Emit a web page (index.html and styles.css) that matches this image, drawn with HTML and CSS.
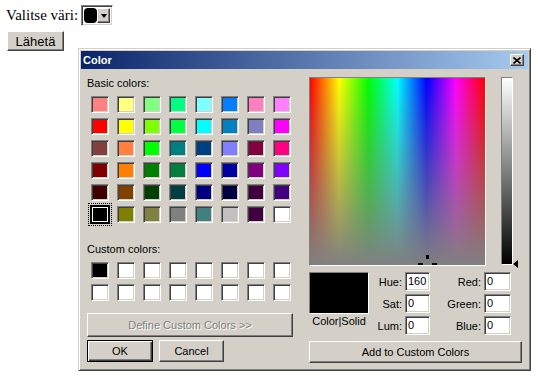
FILE: index.html
```html
<!DOCTYPE html>
<html>
<head>
  <meta charset="utf-8">
  <title>Valitse väri</title>
  <link rel="stylesheet" href="styles.css">
</head>
<body>

  <form class="page-form">
    <div class="pick-row">
      <span class="pick-label">Valitse väri:</span>
      <span class="color-picker">
        <span class="picker-swatch"></span>
        <span class="picker-drop"><span class="drop-arrow"></span></span>
      </span>
    </div>
    <button type="button" class="send-btn">Lähetä</button>
  </form>

  <div class="dialog">
    <div class="titlebar">
      <span class="title-text">Color</span>
      <span class="close-btn">
        <svg width="8" height="7" viewBox="0 0 8 7">
          <path d="M0.5 0.5 L7.5 6.5 M7.5 0.5 L0.5 6.5" stroke="#000" stroke-width="1.6" fill="none"/>
        </svg>
      </span>
    </div>

    <div class="dialog-body">
      <div class="left-col">
        <div class="section-label">Basic colors:</div>
        <div class="swatch-grid" id="basicGrid"></div>

        <div class="section-label custom-label">Custom colors:</div>
        <div class="swatch-grid custom-grid" id="customGrid"></div>

        <button type="button" class="win-btn define-btn" disabled>Define Custom Colors &gt;&gt;</button>
        <div class="action-row">
          <button type="button" class="win-btn ok-btn">OK</button>
          <button type="button" class="win-btn cancel-btn">Cancel</button>
        </div>
      </div>

      <div class="right-col">
        <div class="spectrum-row">
          <div class="spectrum">
            <span class="cross cross-v"></span>
            <span class="cross cross-l"></span>
            <span class="cross cross-r"></span>
          </div>
          <div class="lum-bar">
            <span class="lum-arrow"></span>
          </div>
        </div>

        <div class="color-row">
          <div class="preview-col">
            <div class="preview"></div>
            <div class="preview-label">Color|Solid</div>
          </div>
          <div class="fields">
            <span class="field-label">Hue:</span>
            <span class="field-input">160</span>
            <span class="field-label">Red:</span>
            <span class="field-input">0</span>
            <span class="field-label">Sat:</span>
            <span class="field-input">0</span>
            <span class="field-label">Green:</span>
            <span class="field-input">0</span>
            <span class="field-label">Lum:</span>
            <span class="field-input">0</span>
            <span class="field-label">Blue:</span>
            <span class="field-input">0</span>
          </div>
        </div>

        <button type="button" class="win-btn add-btn">Add to Custom Colors</button>
      </div>
    </div>
  </div>

  <script>
    // Basic colour palette, row by row
    const basicColors = [
      '#ff8080', '#ffff80', '#80ff80', '#00ff80', '#80ffff', '#0080ff', '#ff80c0', '#ff80ff',
      '#ff0000', '#ffff00', '#80ff00', '#00ff40', '#00ffff', '#0080c0', '#8080c0', '#ff00ff',
      '#804040', '#ff8040', '#00ff00', '#008080', '#004080', '#8080ff', '#800040', '#ff0080',
      '#800000', '#ff8000', '#008000', '#008040', '#0000ff', '#0000a0', '#800080', '#8000ff',
      '#400000', '#804000', '#004000', '#004040', '#000080', '#000040', '#400040', '#400080',
      '#000000', '#808000', '#808040', '#808080', '#408080', '#c0c0c0', '#400040', '#ffffff'
    ];

    function fillGrid(id, colors, selected) {
      const grid = document.getElementById(id);
      colors.forEach(function (color, i) {
        const swatch = document.createElement('span');
        swatch.className = 'swatch';
        if (i === selected) swatch.classList.add('selected');
        swatch.style.backgroundColor = color;
        grid.appendChild(swatch);
      });
    }

    fillGrid('basicGrid', basicColors, 40);

    // First custom slot holds black, the rest are empty (white)
    const customColors = ['#000000'];
    for (let i = 1; i < 16; i++) customColors.push('#ffffff');
    fillGrid('customGrid', customColors, -1);
  </script>

</body>
</html>
```

FILE: styles.css
```css
body {
  margin: 0;
  padding: 5px 6px;
  background: #fff;
  font-family: "Liberation Serif", serif;
  font-size: 15px;
  color: #000;
}

.pick-row {
  display: flex;
  align-items: center;
  gap: 3px;
  height: 21px;
}

.color-picker {
  display: flex;
  box-sizing: border-box;
  width: 32px;
  height: 21px;
  padding: 2px;
  background: #fff;
  border: 1px solid;
  border-color: #808080 #fff #fff #808080;
  box-shadow: inset 1px 1px #404040, inset -1px -1px #d4d0c8;
}

.picker-swatch {
  flex: 1;
  background: #000;
  border-radius: 4px;
}

.picker-drop {
  display: flex;
  align-items: center;
  justify-content: center;
  box-sizing: border-box;
  width: 13px;
  background: #d4d0c8;
  border: 1px solid;
  border-color: #fff #404040 #404040 #fff;
  box-shadow: inset -1px -1px #808080;
}

.drop-arrow {
  width: 0;
  height: 0;
  border-left: 3px solid transparent;
  border-right: 3px solid transparent;
  border-top: 4px solid #000;
}

.send-btn {
  display: block;
  margin: 5px 0 0 1px;
  box-sizing: border-box;
  width: 57px;
  height: 20px;
  padding: 0;
  background: #d4d0c8;
  border: 1px solid;
  border-color: #fff #404040 #404040 #fff;
  box-shadow: inset -1px -1px #808080;
  font-family: "Liberation Sans", Arial, sans-serif;
  font-size: 13px;
  color: #000;
}

/* Windows colour dialog */
.dialog {
  position: absolute;
  left: 78px;
  top: 48px;
  box-sizing: border-box;
  width: 453px;
  height: 323px;
  padding: 2px;
  background: #d4d0c8;
  border: 1px solid;
  border-color: #d4d0c8 #404040 #404040 #d4d0c8;
  box-shadow: inset 1px 1px #fff, inset -1px -1px #808080;
  font-family: "Liberation Sans", Arial, sans-serif;
  font-size: 11px;
  color: #000;
}

.titlebar {
  display: flex;
  align-items: center;
  justify-content: space-between;
  height: 18px;
  padding: 0 4px 0 2px;
  background: linear-gradient(to right, #0a246a, #a6caf0);
}

.title-text {
  color: #fff;
  font-weight: bold;
  font-size: 11px;
}

.close-btn {
  display: flex;
  align-items: center;
  justify-content: center;
  box-sizing: border-box;
  width: 14px;
  height: 12px;
  background: #d4d0c8;
  border: 1px solid;
  border-color: #fff #404040 #404040 #fff;
  box-shadow: inset -1px -1px #808080;
}

.dialog-body {
  display: flex;
  gap: 16px;
  padding: 8px 6px 0 6px;
}

.left-col {
  width: 206px;
}

.section-label {
  height: 13px;
  line-height: 13px;
}

.custom-label {
  margin-top: 20px;
}

.swatch-grid {
  display: grid;
  grid-template-columns: repeat(8, 18px);
  column-gap: 8px;
  row-gap: 5px;
  margin: 6px 0 0 4px;
}

.swatch {
  box-sizing: border-box;
  width: 18px;
  height: 17px;
  border: 1px solid;
  border-color: #808080 #fff #fff #808080;
  box-shadow: inset 1px 1px #404040, inset -1px -1px #d4d0c8;
}

.swatch.selected {
  border-color: #000;
  box-shadow: 0 0 0 1px #000, inset 0 0 0 1px #fff;
  outline: 1px dotted #000;
  outline-offset: 2px;
}

.win-btn {
  display: block;
  box-sizing: border-box;
  padding: 0;
  background: #d4d0c8;
  border: 1px solid;
  border-color: #fff #404040 #404040 #fff;
  box-shadow: inset -1px -1px #808080;
  font-family: "Liberation Sans", Arial, sans-serif;
  font-size: 11px;
  color: #000;
}

.define-btn {
  margin-top: 12px;
  width: 206px;
  height: 24px;
  color: #808080;
  text-shadow: 1px 1px #fff;
}

.action-row {
  display: flex;
  gap: 6px;
  margin-top: 3px;
}

.ok-btn {
  width: 66px;
  height: 22px;
  border-color: #000;
  box-shadow: inset 1px 1px #fff, inset -1px -1px #404040, inset -2px -2px #808080;
}

.cancel-btn {
  width: 65px;
  height: 22px;
}

.right-col {
  width: 213px;
}

.spectrum-row {
  display: flex;
  align-items: flex-start;
  gap: 15px;
}

.spectrum {
  position: relative;
  overflow: hidden;
  box-sizing: border-box;
  width: 177px;
  height: 189px;
  border: 1px solid;
  border-color: #808080 #fff #fff #808080;
  background:
    linear-gradient(to bottom, rgba(128, 128, 128, 0), #808080),
    linear-gradient(to right, #f00, #ff0, #0f0, #0ff, #00f, #f0f, #f00);
}

.cross {
  position: absolute;
  background: #000;
}

.cross-v {
  left: 116px;
  top: 177px;
  width: 3px;
  height: 4px;
}

.cross-l {
  left: 108px;
  top: 185px;
  width: 5px;
  height: 3px;
}

.cross-r {
  left: 122px;
  top: 185px;
  width: 5px;
  height: 3px;
}

.lum-bar {
  position: relative;
  box-sizing: border-box;
  width: 12px;
  height: 188px;
  border: 1px solid;
  border-color: #808080 #fff #fff #808080;
  background: linear-gradient(to bottom, #fff, #000);
}

.lum-arrow {
  position: absolute;
  left: 11px;
  top: 182px;
  width: 0;
  height: 0;
  border-top: 4px solid transparent;
  border-bottom: 4px solid transparent;
  border-right: 5px solid #000;
}

.color-row {
  display: flex;
  margin-top: 6px;
}

.preview-col {
  width: 60px;
}

.preview {
  box-sizing: border-box;
  height: 42px;
  background: #000;
  border: 1px solid;
  border-color: #808080 #fff #fff #808080;
}

.preview-label {
  margin-top: 1px;
  line-height: 13px;
  text-align: center;
}

.fields {
  display: grid;
  grid-template-columns: 33px 25px 48px 27px;
  grid-auto-rows: 19px;
  column-gap: 3px;
  row-gap: 3px;
  align-items: center;
}

.field-label {
  text-align: right;
}

.field-input {
  box-sizing: border-box;
  height: 19px;
  padding: 2px 2px;
  line-height: 13px;
  background: #fff;
  border: 1px solid;
  border-color: #808080 #fff #fff #808080;
  box-shadow: inset 1px 1px #404040, inset -1px -1px #d4d0c8;
}

.add-btn {
  margin-top: 6px;
  width: 213px;
  height: 22px;
}
```
